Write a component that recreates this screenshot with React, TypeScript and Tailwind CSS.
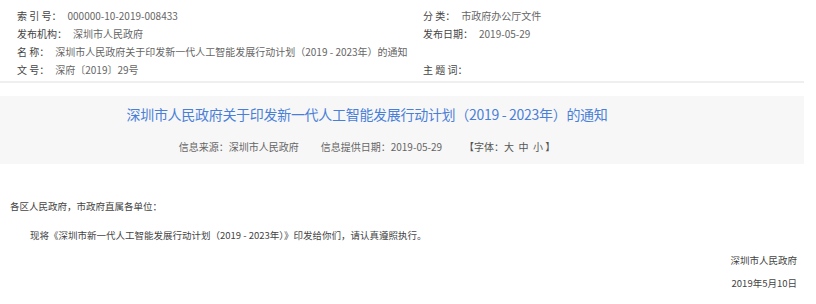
const metaLeft = [
  { label: '索 引 号：', value: '000000-10-2019-008433' },
  { label: '发布机构：', value: '深圳市人民政府' },
  { label: '名 称：', value: '深圳市人民政府关于印发新一代人工智能发展行动计划（2019 - 2023年）的通知' },
  { label: '文 号：', value: '深府〔2019〕29号' },
];

const metaRight = [
  { label: '分 类：', value: '市政府办公厅文件' },
  { label: '发布日期：', value: '2019-05-29' },
  { label: '', value: '' },
  { label: '主 题 词：', value: '' },
];

function MetaRow({ label, value }: { label: string; value: string }) {
  return (
    <div className="flex h-[18px] items-center whitespace-nowrap">
      <span className="text-[#444]">{label}</span>
      {value && <span className="ml-[6px] text-[#666]">{value}</span>}
    </div>
  );
}

export default function App() {
  return (
    <div
      className="w-[816px] h-[304px] overflow-hidden bg-white text-[10px]"
      style={{ fontFamily: '"Noto Sans CJK SC", "Noto Sans", sans-serif' }}
    >
      <div className="w-[804px]">
        {/* document meta */}
        <div className="flex pt-[6px] pl-[17px]">
          <div className="w-[406px] flex flex-col">
            {metaLeft.map((m, i) => (
              <MetaRow key={i} {...m} />
            ))}
          </div>
          <div className="flex flex-col">
            {metaRight.map((m, i) => (
              <MetaRow key={i} {...m} />
            ))}
          </div>
        </div>
        <div className="mt-[3px] h-[2px] bg-[#efefef]" />

        {/* title band */}
        <div className="mt-[13px] bg-[#f7f7f7] pr-[70px] pt-[8px] pb-[9px] text-center">
          <h1 className="text-[14px] leading-[20px] tracking-[-0.3px] text-[#4a7fd8] whitespace-nowrap">
            深圳市人民政府关于印发新一代人工智能发展行动计划（2019 - 2023年）的通知
          </h1>
          <div className="mt-[15px] flex justify-center gap-[22px] leading-[16px] text-[#666] whitespace-nowrap">
            <span>信息来源：深圳市人民政府</span>
            <span>信息提供日期：2019-05-29</span>
            <span className="text-[#555]">【字体：大&nbsp;&nbsp;中&nbsp;&nbsp;小&nbsp;】</span>
          </div>
        </div>

        {/* body */}
        <div className="mt-[34px] pl-[10px] pr-[7px] text-[9.5px] leading-[16px] text-[#444]">
          <p>各区人民政府，市政府直属各单位：</p>
          <p className="mt-[13px] pl-[20px]">
            现将《深圳市新一代人工智能发展行动计划（2019 - 2023年）》印发给你们，请认真遵照执行。
          </p>
          <p className="mt-[9px] text-right">深圳市人民政府</p>
          <p className="mt-[7px] text-right">2019年5月10日</p>
        </div>
      </div>
    </div>
  );
}
